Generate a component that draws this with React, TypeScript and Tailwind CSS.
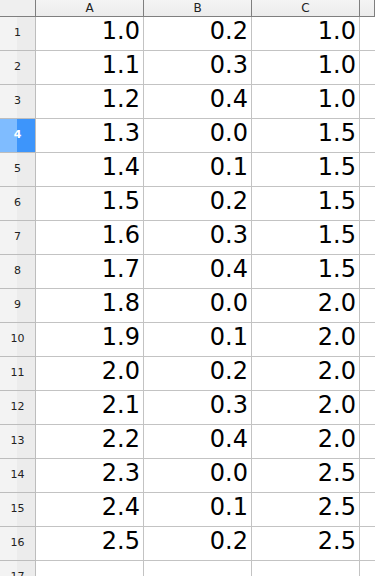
import React from 'react'

const rows = [
  ['1.0', '0.2', '1.0'],
  ['1.1', '0.3', '1.0'],
  ['1.2', '0.4', '1.0'],
  ['1.3', '0.0', '1.5'],
  ['1.4', '0.1', '1.5'],
  ['1.5', '0.2', '1.5'],
  ['1.6', '0.3', '1.5'],
  ['1.7', '0.4', '1.5'],
  ['1.8', '0.0', '2.0'],
  ['1.9', '0.1', '2.0'],
  ['2.0', '0.2', '2.0'],
  ['2.1', '0.3', '2.0'],
  ['2.2', '0.4', '2.0'],
  ['2.3', '0.0', '2.5'],
  ['2.4', '0.1', '2.5'],
  ['2.5', '0.2', '2.5'],
  ['', '', ''],
]

function RowHead({ n, active }: { n: number; active: boolean }) {
  return (
    <div
      className={
        active
          ? 'h-[34px] flex items-center justify-center border-b border-r border-[#bdbdbd] bg-[linear-gradient(to_right,#7fbcff_17px,#3d95fb_17px)] text-white text-[11px] font-bold'
          : 'h-[34px] flex items-center justify-center border-b border-r border-[#bdbdbd] bg-[linear-gradient(to_right,#f3f3f3_17px,#ececec_17px)] text-[#222] text-[11px]'
      }
    >
      {n}
    </div>
  )
}

function Cell({ value }: { value: string }) {
  return (
    <div className="h-[34px] flex items-end justify-end pr-[3px] pb-[4px] border-b border-r border-[#c3c3c3] text-[24px] leading-[30px] text-black">
      {value}
    </div>
  )
}

export default function App() {
  return (
    <div className="w-[375px] h-[576px] overflow-hidden bg-white font-['DejaVu_Sans',sans-serif]">
      <div className="grid grid-cols-[36px_108px_108px_108px_1fr]">
        <div className="h-[17px] border-b border-r border-[#7f7f7f] bg-[#efefef]" />
        {['A', 'B', 'C', ''].map((c, i) => (
          <div
            key={i}
            className="h-[17px] flex items-center justify-center border-b border-r border-[#7f7f7f] bg-[linear-gradient(to_bottom,#f4f4f4,#ececec)] text-[12px] leading-none text-[#222]"
          >
            {c}
          </div>
        ))}
        {rows.map((r, i) => (
          <React.Fragment key={i}>
            <RowHead n={i + 1} active={i === 3} />
            <Cell value={r[0]} />
            <Cell value={r[1]} />
            <Cell value={r[2]} />
            <div className="h-[34px] border-b border-[#c3c3c3]" />
          </React.Fragment>
        ))}
      </div>
    </div>
  )
}
